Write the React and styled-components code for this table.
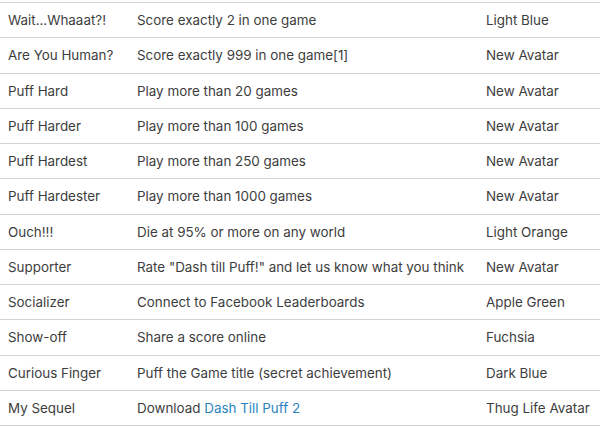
import React from 'react';
import styled, { createGlobalStyle } from 'styled-components';

const GlobalStyle = createGlobalStyle`
  body {
    margin: 0;
    background: #ffffff;
    font-family: Inter, "Open Sans", sans-serif;
    overflow: hidden;
  }
`;

/* Table Style */
const Page = styled.div`
  width: 600px;
  padding-top: 2px;
`;

const Table = styled.table`
  width: 600px;
  border-collapse: collapse;
  table-layout: fixed;
  font-size: 13.4px;
  color: #3d3d3d;
`;

const Row = styled.tr`
  border-top: 1px solid #d4d4d4;
  border-bottom: 1px solid #d4d4d4;
`;

const Cell = styled.td`
  box-sizing: border-box;
  width: ${props => props.$width}px;
  padding: 7px 8px;
  line-height: 20.25px;
  vertical-align: middle;
  white-space: nowrap;
  overflow: hidden;
`;

const Link = styled.a`
  color: #2a84bd;
  text-decoration: none;
`;

const rows = [
  ['Wait...Whaaat?!', 'Score exactly 2 in one game', 'Light Blue'],
  ['Are You Human?', 'Score exactly 999 in one game[1]', 'New Avatar'],
  ['Puff Hard', 'Play more than 20 games', 'New Avatar'],
  ['Puff Harder', 'Play more than 100 games', 'New Avatar'],
  ['Puff Hardest', 'Play more than 250 games', 'New Avatar'],
  ['Puff Hardester', 'Play more than 1000 games', 'New Avatar'],
  ['Ouch!!!', 'Die at 95% or more on any world', 'Light Orange'],
  ['Supporter', 'Rate "Dash till Puff!" and let us know what you think', 'New Avatar'],
  ['Socializer', 'Connect to Facebook Leaderboards', 'Apple Green'],
  ['Show-off', 'Share a score online', 'Fuchsia'],
  ['Curious Finger', 'Puff the Game title (secret achievement)', 'Dark Blue'],
  ['My Sequel', <>Download <Link href="#">Dash Till Puff 2</Link></>, 'Thug Life Avatar'],
];

const App = () => {
  return (
    <Page>
      <GlobalStyle />
      <Table>
        <tbody>
          {rows.map(([name, goal, reward], i) => (
            <Row key={i}>
              <Cell $width={129}>{name}</Cell>
              <Cell $width={349}>{goal}</Cell>
              <Cell $width={122}>{reward}</Cell>
            </Row>
          ))}
        </tbody>
      </Table>
    </Page>
  );
};

export default App;
